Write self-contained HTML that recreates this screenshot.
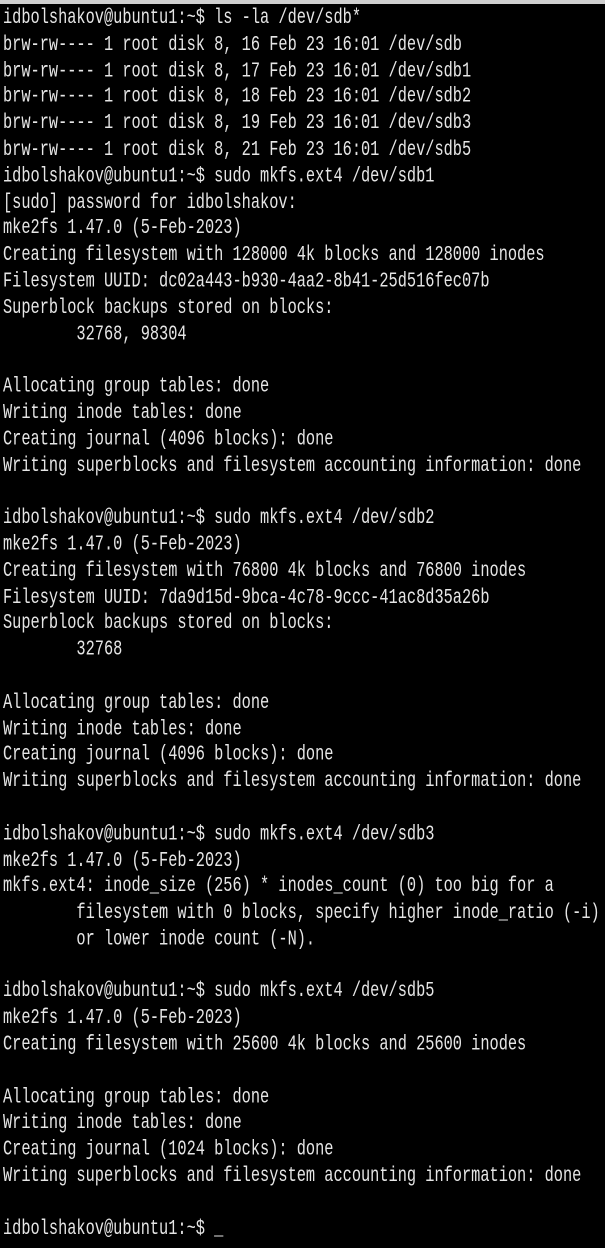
<!DOCTYPE html>
<html><head><meta charset="utf-8"><style>
html,body{margin:0;padding:0;background:#000;width:605px;height:1248px;overflow:hidden}
.top{position:absolute;left:0;top:0;width:605px;height:4px;background:#cfcfcf}
pre{position:absolute;left:3px;top:5px;margin:0;color:#e6e6e6;font-family:"Liberation Mono","DejaVu Sans Mono",monospace;font-size:15.3px;line-height:18.79px;transform:scaleY(1.4);transform-origin:0 0;white-space:pre}
</style></head><body><div class="top"></div><pre>idbolshakov@ubuntu1:~$ ls -la /dev/sdb*
brw-rw---- 1 root disk 8, 16 Feb 23 16:01 /dev/sdb
brw-rw---- 1 root disk 8, 17 Feb 23 16:01 /dev/sdb1
brw-rw---- 1 root disk 8, 18 Feb 23 16:01 /dev/sdb2
brw-rw---- 1 root disk 8, 19 Feb 23 16:01 /dev/sdb3
brw-rw---- 1 root disk 8, 21 Feb 23 16:01 /dev/sdb5
idbolshakov@ubuntu1:~$ sudo mkfs.ext4 /dev/sdb1
[sudo] password for idbolshakov:
mke2fs 1.47.0 (5-Feb-2023)
Creating filesystem with 128000 4k blocks and 128000 inodes
Filesystem UUID: dc02a443-b930-4aa2-8b41-25d516fec07b
Superblock backups stored on blocks:
        32768, 98304

Allocating group tables: done
Writing inode tables: done
Creating journal (4096 blocks): done
Writing superblocks and filesystem accounting information: done

idbolshakov@ubuntu1:~$ sudo mkfs.ext4 /dev/sdb2
mke2fs 1.47.0 (5-Feb-2023)
Creating filesystem with 76800 4k blocks and 76800 inodes
Filesystem UUID: 7da9d15d-9bca-4c78-9ccc-41ac8d35a26b
Superblock backups stored on blocks:
        32768

Allocating group tables: done
Writing inode tables: done
Creating journal (4096 blocks): done
Writing superblocks and filesystem accounting information: done

idbolshakov@ubuntu1:~$ sudo mkfs.ext4 /dev/sdb3
mke2fs 1.47.0 (5-Feb-2023)
mkfs.ext4: inode_size (256) * inodes_count (0) too big for a
        filesystem with 0 blocks, specify higher inode_ratio (-i)
        or lower inode count (-N).

idbolshakov@ubuntu1:~$ sudo mkfs.ext4 /dev/sdb5
mke2fs 1.47.0 (5-Feb-2023)
Creating filesystem with 25600 4k blocks and 25600 inodes

Allocating group tables: done
Writing inode tables: done
Creating journal (1024 blocks): done
Writing superblocks and filesystem accounting information: done

idbolshakov@ubuntu1:~$ _</pre></body></html>
